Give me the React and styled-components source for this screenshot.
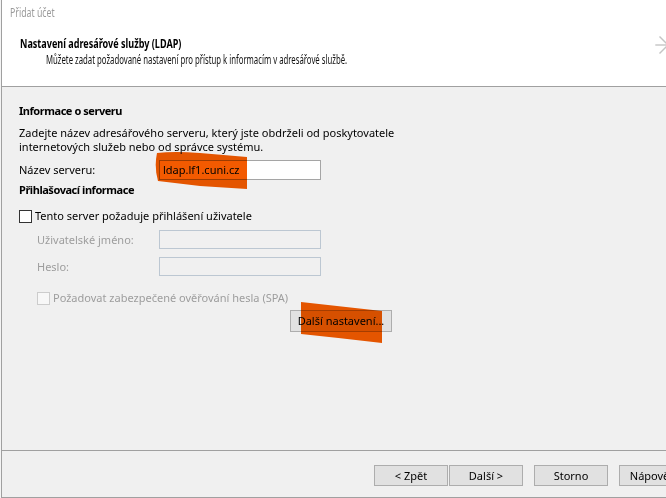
import React from "react";
import styled, { createGlobalStyle } from "styled-components";

const Global = createGlobalStyle`
  html, body { margin: 0; padding: 0; background: #f4f4f4; }
  body { font-family: "Noto Sans", "Open Sans", sans-serif; }
`;

const Screen = styled.div`
  width: 666px;
  height: 498px;
  overflow: hidden;
  padding-left: 1px;
  box-sizing: border-box;
  background: #f4f4f4;
`;

const Window = styled.div`
  position: relative;
  width: 702px;
  height: 497px;
  border-left: 1px solid #a0a0a0;
  border-bottom: 1px solid #a0a0a0;
  display: flex;
  flex-direction: column;
  background: #f0f0f0;
  font-family: "Noto Sans", "Open Sans", sans-serif;
  color: #000;
`;

const Header = styled.header`
  position: relative;
  height: 86px;
  flex: none;
  background: #fff;
  border-bottom: 1px solid #a0a0a0;
`;

const Narrow = styled.span`
  display: inline-block;
  white-space: nowrap;
  transform: scaleX(${(p) => p.$sx});
  transform-origin: left center;
`;

const WindowTitle = styled.div`
  padding: 5px 0 0 8px;
  font-size: 12px;
  line-height: 16px;
  color: #9b9b9b;
`;

const PageTitle = styled.div`
  margin: 15px 0 0 18px;
  font-size: 12px;
  line-height: 16px;
  font-weight: 700;
`;

const PageSubtitle = styled.div`
  margin-left: 44px;
  font-size: 12px;
  line-height: 16px;
  color: #111;
`;

const HeaderArrow = styled.svg`
  position: absolute;
  left: 652px;
  top: 36px;
`;

const Body = styled.main`
  flex: none;
  height: 363px;
  box-sizing: border-box;
  padding: 17px 0 0 17px;
  font-size: 11px;
  line-height: 14px;
`;

const SectionTitle = styled.div`
  margin-top: ${(p) => p.$mt || 0}px;
  font-weight: 700;
  letter-spacing: -0.45px;
`;

const Paragraph = styled.p`
  margin: 8px 0 0;
  width: 400px;
`;

const FieldRow = styled.div`
  display: flex;
  align-items: center;
  margin-top: ${(p) => p.$mt}px;
  padding-left: ${(p) => p.$indent || 0}px;
`;

const FieldLabel = styled.label`
  width: ${(p) => 140 - (p.$indent || 0)}px;
  flex: none;
  color: ${(p) => (p.$disabled ? "#9d9d9d" : "#000")};
`;

const TextBox = styled.div`
  width: 162px;
  height: ${(p) => (p.$disabled ? 19 : 20)}px;
  box-sizing: border-box;
  border: 1px solid ${(p) => (p.$disabled ? "#bcc7d2" : "#a5a5a5")};
  background: ${(p) => (p.$disabled ? "#f0f0f0" : "#fff")};
  padding-left: 3px;
  line-height: 18px;
  font-size: 11px;
`;

const CheckRow = styled.div`
  display: flex;
  align-items: center;
  gap: 3px;
  height: 14px;
  margin-top: ${(p) => p.$mt}px;
  padding-left: ${(p) => p.$indent || 0}px;
  color: ${(p) => (p.$disabled ? "#9d9d9d" : "#000")};
`;

const CheckBox = styled.span`
  width: 13px;
  height: 13px;
  box-sizing: border-box;
  flex: none;
  border: 1px solid ${(p) => (p.$disabled ? "#cccccc" : "#333")};
  background: ${(p) => (p.$disabled ? "#f7f7f7" : "#fff")};
`;

const Button = styled.button`
  width: ${(p) => p.$w || 74}px;
  height: ${(p) => p.$h || 21}px;
  box-sizing: border-box;
  padding: 0;
  border: 1px solid #adadad;
  background: #e1e1e1;
  font-family: "Noto Sans", "Open Sans", sans-serif;
  font-size: 11px;
  line-height: 14px;
  color: #000;
  white-space: nowrap;
  overflow: hidden;
`;

const ButtonRow = styled.div`
  margin-top: 5px;
  padding-left: 271px;
`;

const Footer = styled.footer`
  flex: 1;
  border-top: 1px solid #a0a0a0;
  display: flex;
  justify-content: flex-end;
  align-items: flex-start;
  padding: 14px 11px 0 0;
`;

const ButtonGroup = styled.div`
  display: flex;
  gap: ${(p) => p.$gap}px;
  margin-left: ${(p) => p.$ml || 0}px;
`;

const Marker = styled.svg`
  position: absolute;
  left: ${(p) => p.$x}px;
  top: ${(p) => p.$y}px;
  mix-blend-mode: multiply;
  pointer-events: none;
`;

export default function App() {
  return (
    <Screen>
      <Global />
      <Window>
        <Header>
          <WindowTitle>
            <Narrow $sx={0.73}>Přidat účet</Narrow>
          </WindowTitle>
          <PageTitle>
            <Narrow $sx={0.756}>Nastavení adresářové služby (LDAP)</Narrow>
          </PageTitle>
          <PageSubtitle>
            <Narrow $sx={0.647}>
              Můžete zadat požadované nastavení pro přístup k informacím v adresářové službě.
            </Narrow>
          </PageSubtitle>
          <HeaderArrow width="18" height="20" viewBox="0 0 18 20">
            <g stroke="#c4c4c4" strokeWidth="1.4" fill="none" strokeLinecap="square">
              <line x1="2" y1="9" x2="15" y2="9" />
              <line x1="6" y1="1" x2="14" y2="9" />
              <line x1="6" y1="17" x2="14" y2="9" />
            </g>
          </HeaderArrow>
        </Header>

        <Body>
          <SectionTitle>Informace o serveru</SectionTitle>
          <Paragraph>
            Zadejte název adresářového serveru, který jste obdrželi od poskytovatele
            <br />
            internetových služeb nebo od správce systému.
          </Paragraph>
          <FieldRow $mt={6}>
            <FieldLabel>Název serveru:</FieldLabel>
            <TextBox>ldap.lf1.cuni.cz</TextBox>
          </FieldRow>
          <SectionTitle $mt={3}>Přihlašovací informace</SectionTitle>
          <CheckRow $mt={12}>
            <CheckBox />
            <span>Tento server požaduje přihlášení uživatele</span>
          </CheckRow>
          <FieldRow $mt={7} $indent={18}>
            <FieldLabel $indent={18} $disabled>Uživatelské jméno:</FieldLabel>
            <TextBox $disabled />
          </FieldRow>
          <FieldRow $mt={8} $indent={18}>
            <FieldLabel $indent={18} $disabled>Heslo:</FieldLabel>
            <TextBox $disabled />
          </FieldRow>
          <CheckRow $mt={15} $indent={18} $disabled>
            <CheckBox $disabled />
            <span>Požadovat zabezpečené ověřování hesla (SPA)</span>
          </CheckRow>
          <ButtonRow>
            <Button $w={102} $h={22}>Další nastavení...</Button>
          </ButtonRow>
        </Body>

        <Footer>
          <ButtonGroup $gap={1}>
            <Button>&lt; Zpět</Button>
            <Button>Další &gt;</Button>
          </ButtonGroup>
          <ButtonGroup $gap={11} $ml={11}>
            <Button>Storno</Button>
            <Button>Nápověda</Button>
          </ButtonGroup>
        </Footer>

        <Marker $x={152} $y={150} width="96" height="42" viewBox="0 0 96 42">
          <path d="M3,3 Q20,1 46,3 L93,7 L93,39 L46,36 L4,31 Q0,17 3,3 Z" fill="#f35a00" />
        </Marker>
        <Marker $x={298} $y={301} width="84" height="44" viewBox="0 0 84 44">
          <path d="M1,1 L82,10 L82,42 Q40,37 1,33 Z" fill="#f35a00" />
        </Marker>
      </Window>
    </Screen>
  );
}
